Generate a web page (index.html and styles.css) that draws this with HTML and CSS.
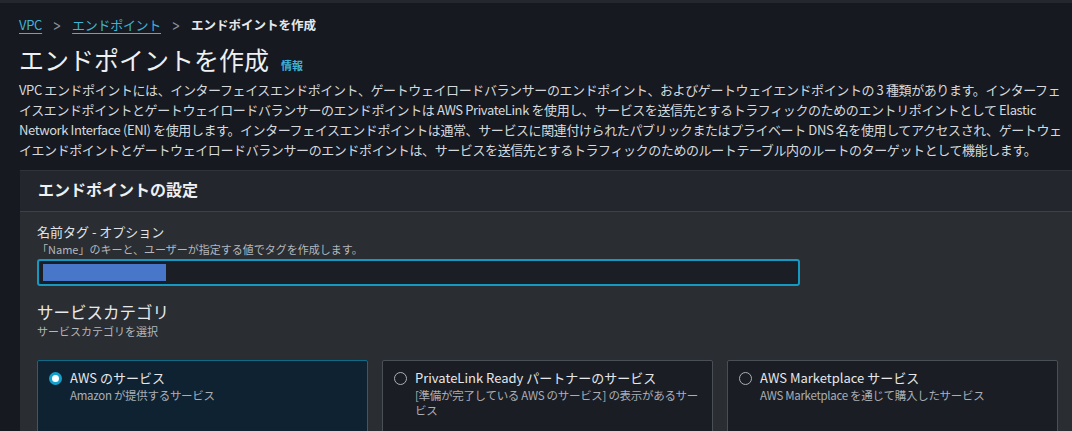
FILE: index.html
```html
<!DOCTYPE html>
<html lang="ja">
<head>
  <meta charset="UTF-8" />
  <title>エンドポイントを作成</title>
  <link rel="stylesheet" href="styles.css">
</head>
<body>
  <div class="topline"></div>
  <div class="page">
    <!-- Breadcrumb -->
    <nav class="breadcrumb">
      <a href="#">VPC</a>
      <span class="sep">&gt;</span>
      <a href="#">エンドポイント</a>
      <span class="sep">&gt;</span>
      <span class="current">エンドポイントを作成</span>
    </nav>

    <div class="title-row">
      <h1>エンドポイントを作成</h1>
      <a href="#" class="info">情報</a>
    </div>
    <p class="desc">VPC エンドポイントには、インターフェイスエンドポイント、ゲートウェイロードバランサーのエンドポイント、およびゲートウェイエンドポイントの 3 種類があります。インターフェ<br>イスエンドポイントとゲートウェイロードバランサーのエンドポイントは AWS PrivateLink を使用し、サービスを送信先とするトラフィックのためのエントリポイントとして Elastic<br>Network Interface (ENI) を使用します。インターフェイスエンドポイントは通常、サービスに関連付けられたパブリックまたはプライベート DNS 名を使用してアクセスされ、ゲートウェ<br>イエンドポイントとゲートウェイロードバランサーのエンドポイントは、サービスを送信先とするトラフィックのためのルートテーブル内のルートのターゲットとして機能します。</p>

    <!-- Endpoint settings -->
    <div class="panel">
      <div class="panel-header">
        <h2>エンドポイントの設定</h2>
      </div>
      <div class="panel-body">
        <div class="field">
          <label>名前タグ - オプション</label>
          <div class="hint">「Name」のキーと、ユーザーが指定する値でタグを作成します。</div>
          <div class="input"><span class="selected"></span></div>
        </div>

        <div class="section">
          <h3>サービスカテゴリ</h3>
          <div class="hint">サービスカテゴリを選択</div>
        </div>

        <div class="tiles">
          <div class="tile active">
            <span class="radio checked"></span>
            <div>
              <div class="tile-title">AWS のサービス</div>
              <div class="tile-sub">Amazon が提供するサービス</div>
            </div>
          </div>
          <div class="tile">
            <span class="radio"></span>
            <div>
              <div class="tile-title">PrivateLink Ready パートナーのサービス</div>
              <div class="tile-sub">[準備が完了している AWS のサービス] の表示があるサービス</div>
            </div>
          </div>
          <div class="tile">
            <span class="radio"></span>
            <div>
              <div class="tile-title">AWS Marketplace サービス</div>
              <div class="tile-sub">AWS Marketplace を通じて購入したサービス</div>
            </div>
          </div>
        </div>
      </div>
    </div>
  </div>
</body>
</html>
```

FILE: styles.css
```css
* {
  box-sizing: border-box;
}
html, body {
  overflow: hidden;
}
body {
  margin: 0;
  width: 1072px;
  height: 431px;
  background: #161920;
  color: #d5d9de;
  font-family: "Noto Sans CJK JP", "Noto Sans", sans-serif;
}
.topline {
  height: 3px;
  background: #24272d;
}
.page {
  padding: 11px 0 0 19px;
}
.breadcrumb {
  display: flex;
  align-items: center;
  font-size: 13px;
  line-height: 22px;
}
.breadcrumb a {
  color: #3fb3d6;
  text-decoration: underline;
  text-underline-offset: 3px;
  letter-spacing: -0.3px;
}
.breadcrumb .sep {
  color: #8a9099;
  margin: 0 10px;
  font-size: 18px;
  line-height: 22px;
  transform: scaleX(0.7);
}
.breadcrumb .current {
  color: #e6e8eb;
  font-weight: bold;
  font-size: 12.5px;
}
.title-row {
  display: flex;
  align-items: baseline;
  margin-top: 7px;
}
h1 {
  margin: 0;
  font-size: 25px;
  font-weight: normal;
  color: #eef0f2;
  line-height: 32px;
}
.info {
  margin-left: 12px;
  font-size: 11px;
  font-weight: bold;
  color: #3fb3d6;
  text-decoration: none;
}
.desc {
  margin: 5px 0 0;
  white-space: nowrap;
  font-size: 13px;
  letter-spacing: -0.4px;
  line-height: 20px;
  color: #d5d9de;
}
/* Panel */
.panel {
  margin-top: 10px;
  margin-left: 1px;
  width: 1060px;
  background: #2a2d32;
  border-top: 1px solid #30333a;
}
.panel-header {
  background: #23262d;
  border-bottom: 1px solid #3c4047;
  padding: 6px 18px 9px;
}
.panel-header h2 {
  margin: 0;
  font-size: 16px;
  line-height: 25px;
  color: #eef0f2;
}
.panel-body {
  padding: 10px 18px 0 17px;
}
.field label {
  display: block;
  font-size: 13px;
  line-height: 20px;
  color: #dfe2e6;
}
.hint {
  font-size: 11px;
  line-height: 15px;
  color: #b3b8bf;
}
.input {
  margin-top: 2px;
  width: 763px;
  height: 27px;
  border: 2px solid #1599c2;
  border-radius: 3px;
  background: #1b1e24;
  padding: 3px 4px;
}
.selected {
  display: block;
  width: 123px;
  height: 17px;
  background: #4877c9;
}
.section {
  margin-top: 14px;
}
.section h3 {
  margin: 0;
  font-size: 16.5px;
  font-weight: normal;
  line-height: 24px;
  color: #e6e8eb;
}
.tiles {
  margin-top: 21px;
  display: grid;
  grid-template-columns: 331px 331px 331px;
  gap: 14px;
}
.tile {
  display: flex;
  gap: 8px;
  height: 80px;
  padding: 6px 8px 0 11px;
  background: #1a1d24;
  border: 1px solid #4a4e56;
  border-radius: 2px;
}
.tile.active {
  background: #0f2232;
  border-color: #0e6a86;
}
.radio {
  flex: none;
  margin-top: 5px;
  width: 13px;
  height: 13px;
  border: 1px solid #aab0b8;
  border-radius: 50%;
}
.radio.checked {
  border: 3.5px solid #10a2cf;
  background: #ffffff;
}
.tile-title {
  font-size: 13px;
  line-height: 21px;
  color: #e6e8eb;
}
.tile-sub {
  font-size: 11.5px;
  letter-spacing: -0.3px;
  line-height: 15px;
  color: #a9afb7;
}
```
